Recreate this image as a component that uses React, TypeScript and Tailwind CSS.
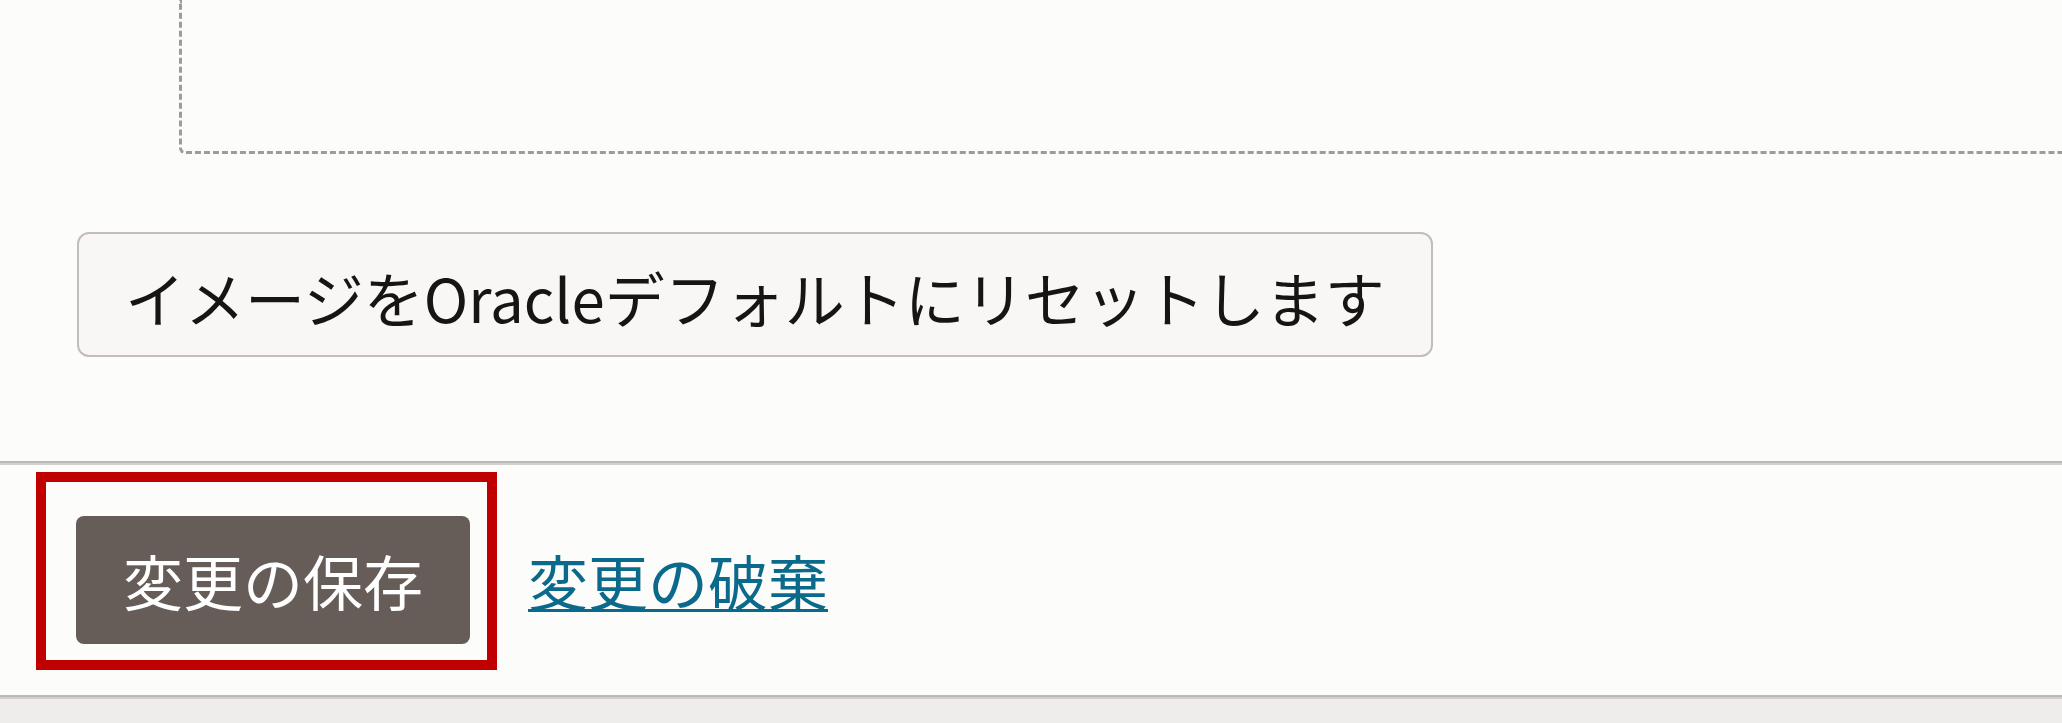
const jp = "font-['Noto_Sans_CJK_JP','Noto_Sans',sans-serif]";

function ImageDropZone() {
  // only the lower-left corner of the dashed drop area is visible
  return (
    <div className="h-[154px] pl-[179px]">
      <div className="h-full rounded-bl-md border-b-[3px] border-l-[3px] border-dashed border-[#9f9b96]" />
    </div>
  );
}

function ResetButton() {
  return (
    <div className="mt-[78px] pl-[77px]">
      <button className="flex h-[125px] items-center rounded-xl border-2 border-[#c2bdb8] bg-[#f8f7f6] px-[46px] pt-1 text-[60px] leading-none text-[#161513]">
        イメージをOracleデフォルトにリセットします
      </button>
    </div>
  );
}

function Footer() {
  return (
    <div className="flex items-center gap-[58px] py-[51px] pl-[76px]">
      <div className="relative">
        <button className="flex h-[128px] w-[394px] items-center justify-center rounded-lg bg-[#665d58] text-[60px] leading-none text-white">
          変更の保存
        </button>
        <div className="pointer-events-none absolute -top-[44px] -right-[27px] -bottom-[26px] -left-[40px] border-[10px] border-[#c00000]" />
      </div>
      <a
        href="#"
        className="text-[60px] leading-none text-[#0b6a8c] underline decoration-[3px] underline-offset-[3px]"
      >
        変更の破棄
      </a>
    </div>
  );
}

export default function App() {
  return (
    <div className={`flex h-[723px] flex-col overflow-hidden bg-[#fcfcfb] ${jp}`}>
      <ImageDropZone />
      <ResetButton />
      <div className="mt-[104px] h-[4px] border-t-2 border-[#bdb8b3] bg-[#d3cfcb]" />
      <Footer />
      <div className="h-[4px] border-t-2 border-[#bdb8b3] bg-[#d3cfcb]" />
      <div className="flex-1 bg-[#eeedeb]" />
    </div>
  );
}
